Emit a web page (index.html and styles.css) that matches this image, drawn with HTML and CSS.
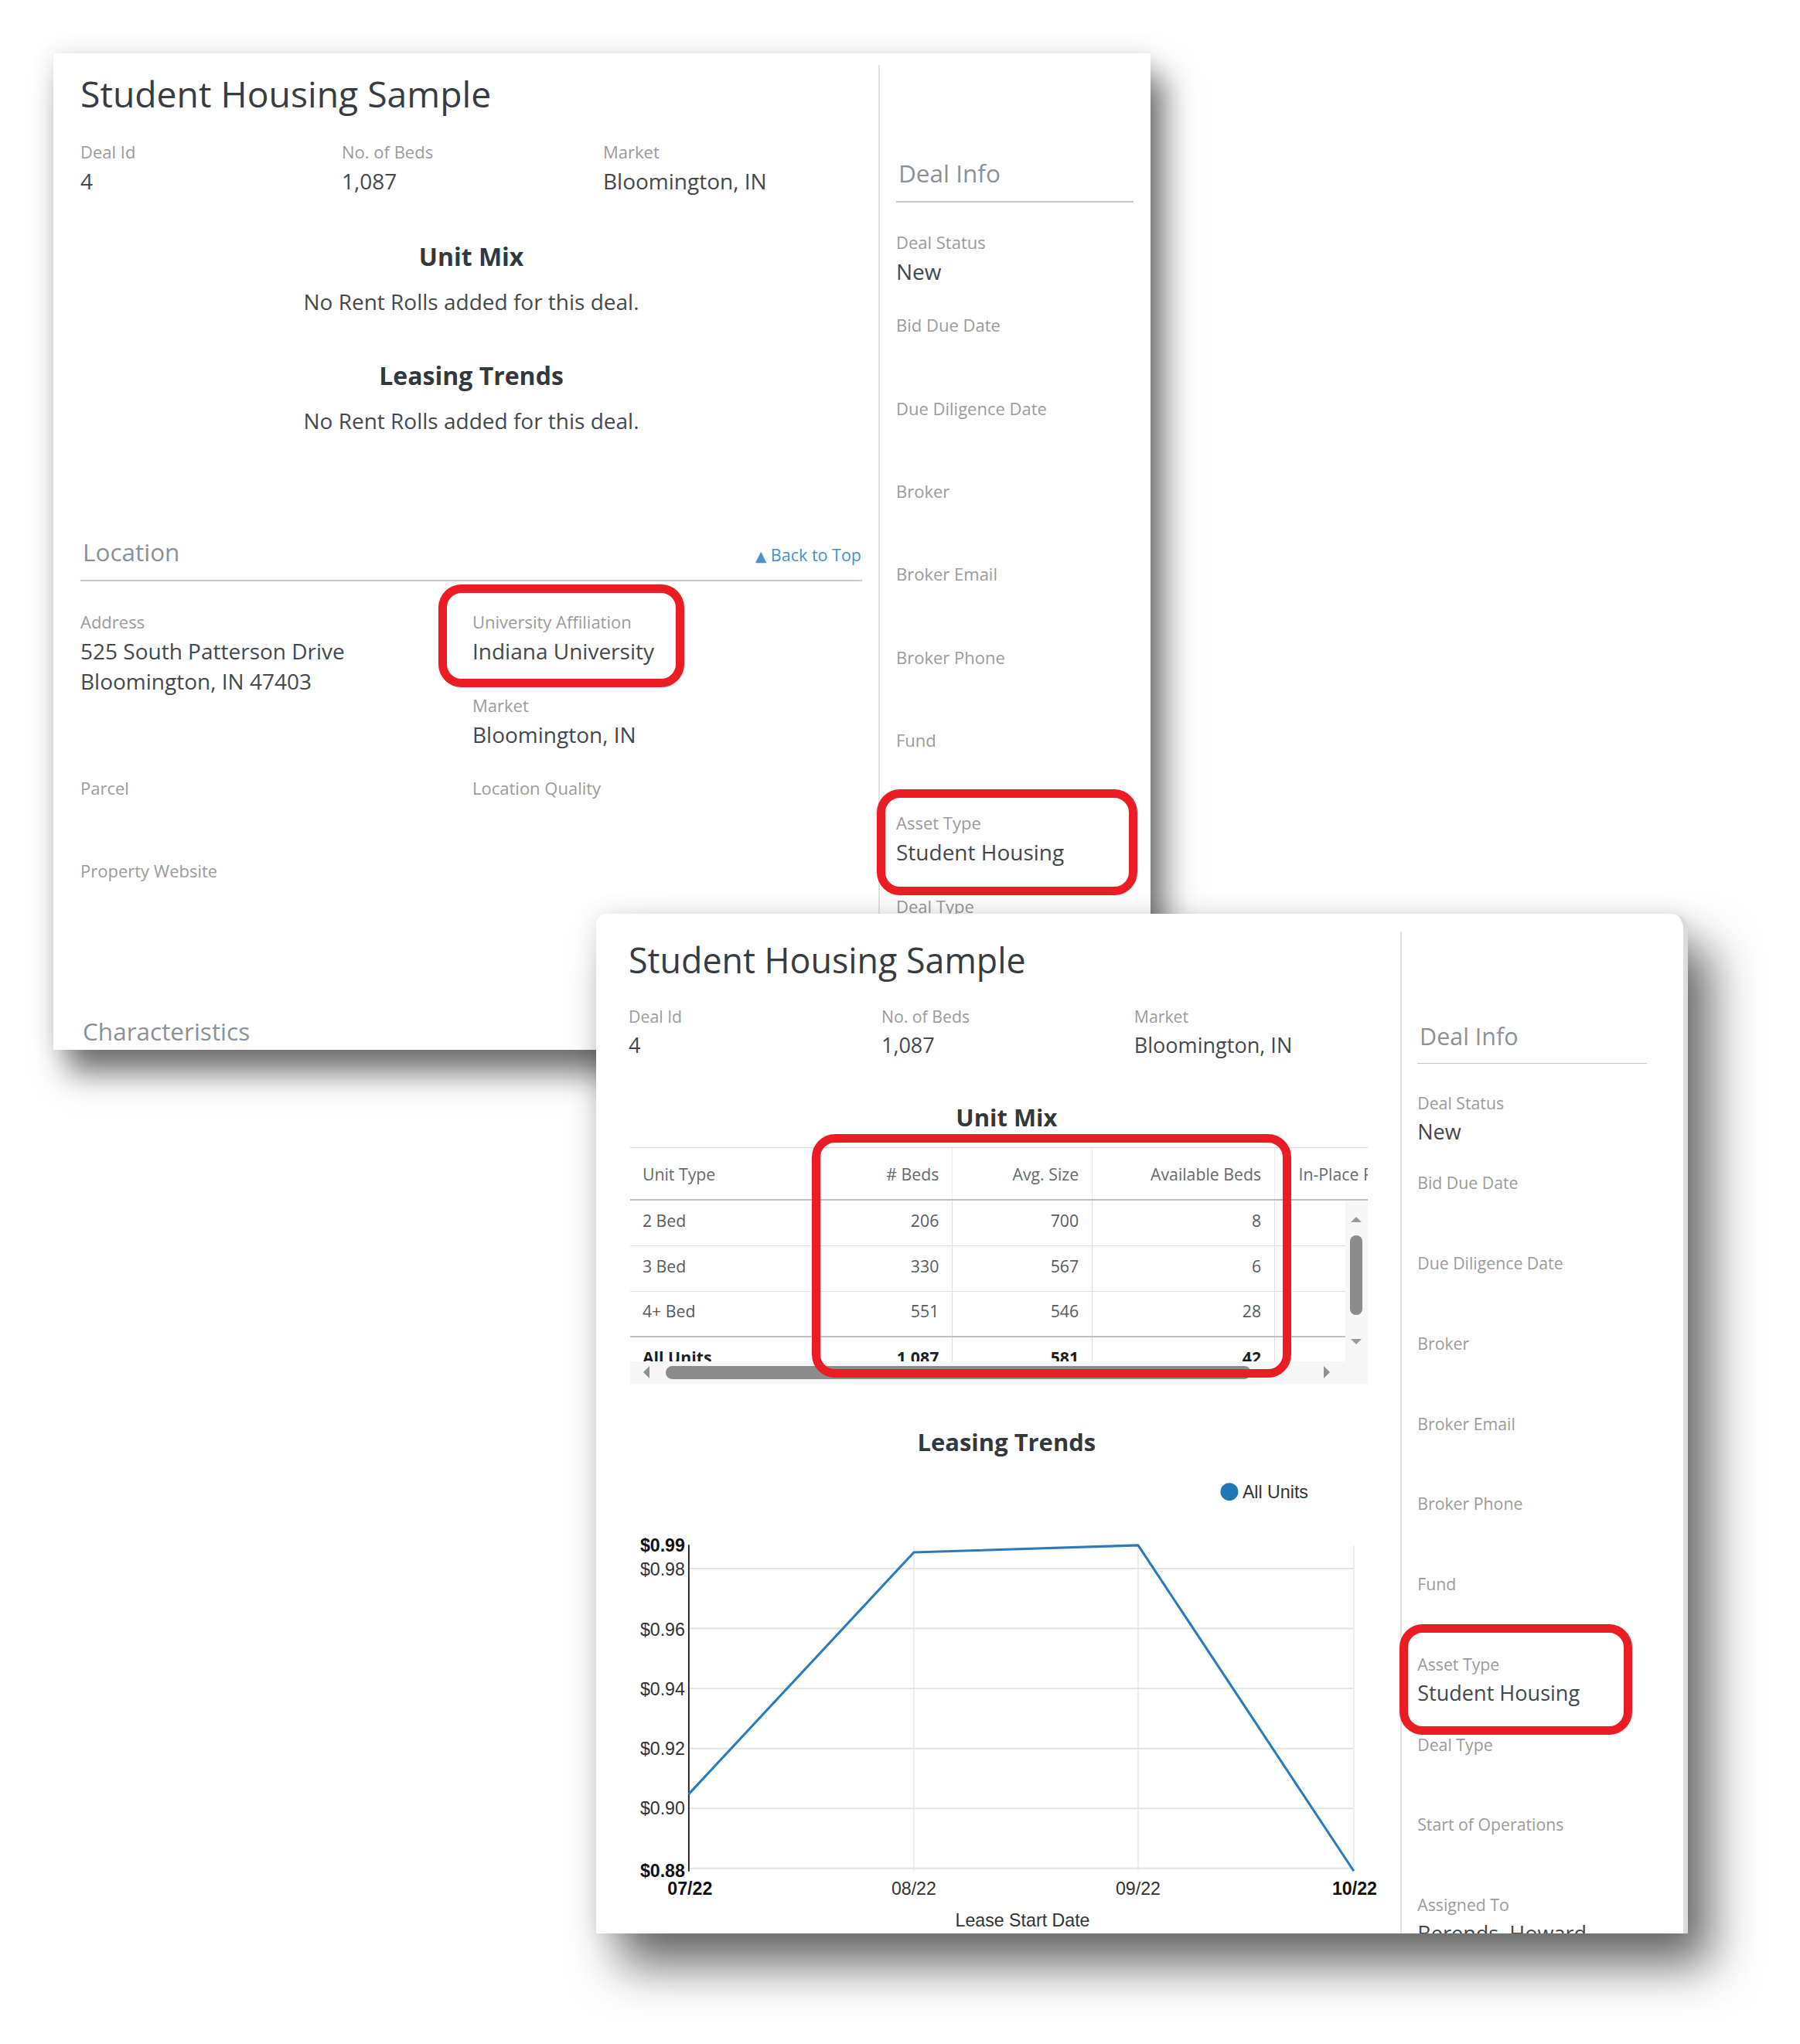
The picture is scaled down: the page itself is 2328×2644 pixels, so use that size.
FILE: index.html
```html
<!DOCTYPE html>
<html>
<head>
<meta charset="utf-8">
<title>Student Housing Sample</title>
<link rel="stylesheet" href="styles.css">
</head>
<body>

<div class="shot shot-1">
  <div class="deal">
    <div class="main">
      <h1 class="title">Student Housing Sample</h1>
      <div class="stats">
        <div class="field"><div class="label">Deal Id</div><div class="value">4</div></div>
        <div class="field"><div class="label">No. of Beds</div><div class="value">1,087</div></div>
        <div class="field"><div class="label">Market</div><div class="value">Bloomington, IN</div></div>
      </div>
      <section class="block">
        <h2 class="block-title">Unit Mix</h2>
        <p class="note">No Rent Rolls added for this deal.</p>
      </section>
      <section class="block">
        <h2 class="block-title">Leasing Trends</h2>
        <p class="note">No Rent Rolls added for this deal.</p>
      </section>
      <div class="sec-head sec-location">
        <span class="sec-title">Location</span>
        <a class="backtop"><span class="tri">▲</span> Back to Top</a>
      </div>
      <div class="loc-grid">
        <div class="field"><div class="label">Address</div><div class="value">525 South Patterson Drive<br>Bloomington, IN 47403</div></div>
        <div class="field"><div class="label">University Affiliation</div><div class="value">Indiana University</div></div>
        <div class="field col-2"><div class="label">Market</div><div class="value">Bloomington, IN</div></div>
        <div class="field"><div class="label">Parcel</div><div class="value"></div></div>
        <div class="field"><div class="label">Location Quality</div><div class="value"></div></div>
        <div class="field"><div class="label">Property Website</div><div class="value"></div></div>
      </div>
      <div class="sec-head sec-char"><span class="sec-title">Characteristics</span></div>
    </div>
    <div class="divider"></div>
    <aside class="side">
      <div class="sec-head"><span class="sec-title">Deal Info</span></div>
      <div class="info-list">
        <div class="field"><div class="label">Deal Status</div><div class="value">New</div></div>
        <div class="field"><div class="label">Bid Due Date</div><div class="value"></div></div>
        <div class="field"><div class="label">Due Diligence Date</div><div class="value"></div></div>
        <div class="field"><div class="label">Broker</div><div class="value"></div></div>
        <div class="field"><div class="label">Broker Email</div><div class="value"></div></div>
        <div class="field"><div class="label">Broker Phone</div><div class="value"></div></div>
        <div class="field"><div class="label">Fund</div><div class="value"></div></div>
        <div class="field"><div class="label">Asset Type</div><div class="value">Student Housing</div></div>
        <div class="field"><div class="label">Deal Type</div><div class="value"></div></div>
        <div class="field"><div class="label">Start of Operations</div><div class="value"></div></div>
        <div class="field"><div class="label">Assigned To</div><div class="value">Berends, Howard</div></div>
      </div>
    </aside>
  </div>
</div>

<div class="shot shot-2">
  <div class="deal deal-z">
    <div class="main">
      <h1 class="title">Student Housing Sample</h1>
      <div class="stats">
        <div class="field"><div class="label">Deal Id</div><div class="value">4</div></div>
        <div class="field"><div class="label">No. of Beds</div><div class="value">1,087</div></div>
        <div class="field"><div class="label">Market</div><div class="value">Bloomington, IN</div></div>
      </div>
      <section class="block">
        <h2 class="block-title">Unit Mix</h2>
        <div class="um-table">
          <div class="thead">
            <div class="c c1">Unit Type</div>
            <div class="c c2"># Beds</div>
            <div class="c c3">Avg. Size</div>
            <div class="c c4">Available Beds</div>
            <div class="c c5">In-Place Rent</div>
          </div>
          <div class="tbody-wrap">
            <div class="tbody">
              <div class="tr"><div class="c c1">2 Bed</div><div class="c c2">206</div><div class="c c3">700</div><div class="c c4">8</div><div class="c c5"></div></div>
              <div class="tr"><div class="c c1">3 Bed</div><div class="c c2">330</div><div class="c c3">567</div><div class="c c4">6</div><div class="c c5"></div></div>
              <div class="tr tr-last"><div class="c c1">4+ Bed</div><div class="c c2">551</div><div class="c c3">546</div><div class="c c4">28</div><div class="c c5"></div></div>
              <div class="tr tr-total"><div class="c c1">All Units</div><div class="c c2">1,087</div><div class="c c3">581</div><div class="c c4">42</div><div class="c c5"></div></div>
            </div>
            <div class="vscroll"><span class="arr-up"></span><span class="vthumb"></span><span class="arr-down"></span></div>
          </div>
          <div class="hscroll"><span class="arr-left"></span><span class="hthumb"></span><span class="arr-right"></span></div>
        </div>
      </section>
      <section class="block">
        <h2 class="block-title">Leasing Trends</h2>
        <svg class="chart" viewBox="0 0 1011 635" width="1011" height="635">
          <circle class="legend-dot" cx="803.5" cy="45.2" r="11.9"></circle>
          <text class="ax" x="821" y="53.6">All Units</text>
          <g class="grid-h">
            <line x1="80.5" y1="147.9" x2="969.9" y2="147.9"></line>
            <line x1="80.5" y1="228.1" x2="969.9" y2="228.1"></line>
            <line x1="80.5" y1="308.3" x2="969.9" y2="308.3"></line>
            <line x1="80.5" y1="388.5" x2="969.9" y2="388.5"></line>
            <line x1="80.5" y1="468.7" x2="969.9" y2="468.7"></line>
            <line x1="80.5" y1="548.9" x2="969.9" y2="548.9"></line>
          </g>
          <g class="grid-v">
            <line x1="381.5" y1="117.2" x2="381.5" y2="552.5"></line>
            <line x1="681.5" y1="117.2" x2="681.5" y2="552.5"></line>
            <line x1="969.9" y1="117.2" x2="969.9" y2="552.5"></line>
          </g>
          <line class="axis" x1="80.5" y1="116.2" x2="80.5" y2="553"></line>
          <polyline class="series" points="80.5,449.5 381.5,126.2 681.5,116.7 969.9,552.5"></polyline>
          <g class="ax end">
            <text class="ax-b" x="75.4" y="124.8">$0.99</text>
            <text x="75.4" y="157.6">$0.98</text>
            <text x="75.4" y="237.8">$0.96</text>
            <text x="75.4" y="317.6">$0.94</text>
            <text x="75.4" y="396.8">$0.92</text>
            <text x="75.4" y="476.4">$0.90</text>
            <text class="ax-b" x="75.4" y="560.4">$0.88</text>
          </g>
          <g class="ax mid">
            <text class="ax-b" x="82" y="583.9">07/22</text>
            <text x="381.5" y="583.9">08/22</text>
            <text x="681.5" y="583.9">09/22</text>
            <text class="ax-b" x="971" y="583.9">10/22</text>
            <text x="526.9" y="626.3">Lease Start Date</text>
          </g>
        </svg>
      </section>
    </div>
    <div class="divider"></div>
    <aside class="side">
      <div class="sec-head"><span class="sec-title">Deal Info</span></div>
      <div class="info-list">
        <div class="field"><div class="label">Deal Status</div><div class="value">New</div></div>
        <div class="field"><div class="label">Bid Due Date</div><div class="value"></div></div>
        <div class="field"><div class="label">Due Diligence Date</div><div class="value"></div></div>
        <div class="field"><div class="label">Broker</div><div class="value"></div></div>
        <div class="field"><div class="label">Broker Email</div><div class="value"></div></div>
        <div class="field"><div class="label">Broker Phone</div><div class="value"></div></div>
        <div class="field"><div class="label">Fund</div><div class="value"></div></div>
        <div class="field"><div class="label">Asset Type</div><div class="value">Student Housing</div></div>
        <div class="field"><div class="label">Deal Type</div><div class="value"></div></div>
        <div class="field"><div class="label">Start of Operations</div><div class="value"></div></div>
        <div class="field"><div class="label">Assigned To</div><div class="value">Berends, Howard</div></div>
      </div>
    </aside>
  </div>
</div>

<div class="mark mark-1"></div>
<div class="mark mark-2"></div>
<div class="mark mark-3"></div>
<div class="mark mark-4"></div>

</body>
</html>
```

FILE: styles.css
```css
* { box-sizing: border-box; }

html, body {
  margin: 0;
  padding: 0;
  background: #ffffff;
}

body {
  position: relative;
  width: 2328px;
  height: 2644px;
  overflow: hidden;
  font-family: "Open Sans", "Noto Sans", sans-serif;
  color: #464b50;
}

/* screenshot "windows" on a free canvas */
.shot {
  position: absolute;
  background: #ffffff;
  overflow: hidden;
}

.shot-1 {
  left: 69px;
  top: 69px;
  width: 1419px;
  height: 1289px;
  box-shadow: 0 0 28px rgba(0, 0, 0, 0.10), 18px 30px 38px rgba(0, 0, 0, 0.55);
}

.shot-2 {
  left: 771px;
  top: 1182px;
  width: 1412px;
  height: 1319px;
  border-right: 6px solid #dcdcdc;
  border-radius: 14px 20px 0 0;
  box-shadow: 0 0 30px rgba(0, 0, 0, 0.10), 30px 42px 62px rgba(0, 0, 0, 0.58);
}

.deal {
  display: flex;
  align-items: stretch;
  height: 100%;
  padding: 0 0 0 35px;
}

.deal-z {
  zoom: 0.967;
  height: 1364px;
  padding: 9.3px 0 0 43.5px;
}

.main {
  flex: none;
  width: 1011px;
  padding-top: 23.2px;
}

.divider {
  flex: none;
  width: 2px;
  margin: 15px 21px 0;
  background: #e1e1e1;
}

.side {
  flex: none;
  width: 307px;
  padding-top: 132.8px;
}

/* text */
.title {
  margin: 0;
  font-size: 46.3px;
  line-height: 60px;
  font-weight: 400;
  color: #373c41;
  white-space: nowrap;
}

.label {
  font-size: 22px;
  line-height: 30px;
  color: #9b9b9b;
  white-space: nowrap;
}

.value {
  margin-top: 4px;
  min-height: 39px;
  font-size: 28px;
  line-height: 39px;
  color: #43484d;
  white-space: nowrap;
}

.stats {
  display: grid;
  grid-template-columns: 338px 338px 1fr;
  margin-top: 29.3px;
}

.block {
  margin-top: 55.5px;
  text-align: center;
}

.block-title {
  margin: 0;
  font-size: 32px;
  line-height: 44px;
  font-weight: 700;
  color: #33383d;
}

.note {
  margin: 17px 0 0;
  font-size: 28px;
  line-height: 38px;
  color: #43484d;
}

.sec-head {
  display: flex;
  justify-content: space-between;
  align-items: baseline;
  padding-bottom: 14px;
  border-bottom: 2px solid #bdc8d2;
}

.sec-title {
  padding-left: 3px;
  font-size: 31.5px;
  line-height: 44px;
  color: #8b9199;
}

.backtop {
  font-size: 21.5px;
  color: #4a8dcf;
  margin-right: 1px;
}

.tri {
  font-family: "DejaVu Sans", sans-serif;
  font-size: 19px;
  color: #4f8fcd;
}

.sec-location { margin-top: 128.3px; }
.sec-char { margin-top: 93.1px; }

.loc-grid {
  display: grid;
  grid-template-columns: 507px 504px;
  grid-auto-rows: 107.3px;
  margin-top: 37.7px;
}

.loc-grid .col-2 { grid-column: 2; }

.info-list { margin-top: 36.4px; }
.info-list .field { height: 107.3px; }

/* unit mix table */
.um-table {
  width: 986.5px;
  margin: 18.5px 0 0 2px;
  overflow: hidden;
  text-align: left;
}

.thead {
  display: flex;
  height: 71px;
  border-top: 2px solid #d9d9d9;
  border-bottom: 3px solid #bfbfbf;
}

.c {
  flex: none;
  display: flex;
  align-items: center;
  justify-content: flex-end;
  padding: 0 17px;
  font-size: 22px;
  color: #666a6e;
  white-space: nowrap;
  border-left: 2px solid #ececec;
}

.c1 { width: 247px; justify-content: flex-start; padding-left: 16.5px; border-left: 0; }
.c2 { width: 183px; }
.c3 { width: 187px; }
.c4 { width: 244px; }
.c5 { width: 183px; justify-content: flex-start; padding-left: 32px; }

.tbody-wrap {
  display: flex;
  height: 215px;
}

.tbody {
  flex: none;
  width: 956.5px;
  overflow: hidden;
}

.tr {
  display: flex;
  height: 61px;
  border-bottom: 2px solid #e2e2e2;
}

.tr .c {
  color: #575b5f;
  padding-bottom: 8px;
  border-left-color: #dedede;
}

.tr-last { border-bottom: 3px solid #bfbfbf; }

.tr-total .c {
  font-weight: 700;
  color: #1e1e1e;
  padding-top: 0;
  padding-bottom: 8px;
}

.vscroll {
  flex: none;
  width: 30px;
  display: flex;
  flex-direction: column;
  align-items: center;
  padding-top: 22px;
  background: #f7f7f7;
}

.arr-up {
  width: 0;
  height: 0;
  border-left: 8px solid transparent;
  border-right: 8px solid transparent;
  border-bottom: 8px solid #9a9a9a;
}

.vthumb {
  width: 16.6px;
  height: 107px;
  margin-top: 17px;
  border-radius: 8px;
  background: #8c8c8c;
}

.arr-down {
  width: 0;
  height: 0;
  margin-top: 32px;
  border-left: 8px solid transparent;
  border-right: 8px solid transparent;
  border-top: 8px solid #9a9a9a;
}

.hscroll {
  display: flex;
  align-items: center;
  height: 30px;
  padding-left: 17.5px;
  background: #f7f7f7;
}

.arr-left {
  width: 0;
  height: 0;
  border-top: 9px solid transparent;
  border-bottom: 9px solid transparent;
  border-right: 9px solid #8f8f8f;
}

.hthumb {
  width: 783.5px;
  height: 18px;
  margin-left: 21.5px;
  border-radius: 9px;
  background: #8c8c8c;
}

.arr-right {
  width: 0;
  height: 0;
  margin-left: 97px;
  border-top: 9px solid transparent;
  border-bottom: 9px solid transparent;
  border-left: 9px solid #8f8f8f;
}

/* chart */
.chart {
  display: block;
  width: 1011px;
  height: 635px;
}

.legend-dot { fill: #1f77b4; }

.ax {
  font-family: "Liberation Sans", Arial, sans-serif;
  font-size: 24px;
  fill: #333333;
}

.end { text-anchor: end; }
.mid { text-anchor: middle; }

.ax-b {
  font-weight: 700;
  fill: #111111;
}

.grid-h line {
  stroke: #e2e2e2;
  stroke-width: 2;
}

.grid-v line {
  stroke: #e6e6e6;
  stroke-width: 1.5;
}

.axis {
  stroke: #222222;
  stroke-width: 2;
}

.series {
  fill: none;
  stroke: #2b7bba;
  stroke-width: 3.2;
  stroke-linejoin: round;
}

/* red annotation rings laid over the screenshots */
.mark {
  position: absolute;
  border: 11px solid #ec1c24;
  border-radius: 30px;
}

.mark-1 { left: 567px; top: 756px; width: 318px; height: 133px; }
.mark-2 { left: 1134px; top: 1021px; width: 337px; height: 137px; }
.mark-3 { left: 1050px; top: 1467px; width: 620px; height: 315px; }
.mark-4 { left: 1810px; top: 2101px; width: 301px; height: 143px; }
```
